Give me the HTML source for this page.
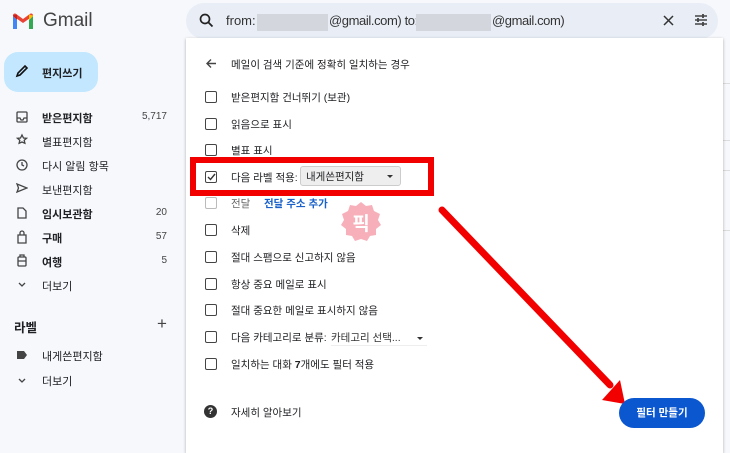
<!DOCTYPE html>
<html><head><meta charset="utf-8"><style>
*{margin:0;padding:0;box-sizing:border-box}
body{width:730px;height:449px;overflow:hidden;background:#f6f8fc;font-family:"Liberation Sans","Noto Sans CJK KR",sans-serif;color:#202124;position:relative}
.a{position:absolute}
.nav{position:absolute;left:42px;font-size:11px;color:#202124}
.b{font-weight:bold}
.cnt{position:absolute;right:563px;font-size:10px;color:#444}
.cb{position:absolute;left:205px;width:12px;height:12px;border:1.6px solid #444;border-radius:2px}
.rt{position:absolute;left:231px;font-size:10.5px;color:#202124}
</style></head><body>
<svg class="a" style="left:12px;top:13px" width="22" height="17" viewBox="0 0 22 17">
<path d="M1 3v13h4V7z" fill="#4285f4"/><path d="M17 7v9h4V3z" fill="#34a853"/>
<path d="M1 3l10 7 10-7v-0.5C21 0.5 19 0 17.5 1.2L11 6 4.5 1.2C3 0 1 0.5 1 2.5z" fill="#ea4335"/>
<path d="M17 7V1.5L21 2.5V3z" fill="#fbbc04"/><path d="M1 3V2.5L5 1.5V7z" fill="#c5221f"/>
</svg>
<div class="a" style="left:43px;top:10px;font-size:19px;color:#444">Gmail</div>
<div class="a" style="left:4px;top:52px;width:94px;height:40px;background:#c2e7ff;border-radius:14px"></div>
<svg class="a" style="left:15px;top:64px" width="14" height="14" viewBox="0 0 14 14"><path d="M2 12l1-3 7-7 2 2-7 7z" fill="none" stroke="#111" stroke-width="1.6"/></svg>
<div class="a b" style="left:42px;top:65px;font-size:11px">편지쓰기</div>
<svg class="a" style="left:16px;top:111px" width="12" height="180" viewBox="0 0 12 180" fill="none" stroke="#444" stroke-width="1.3">
<rect x="1" y="1" width="10" height="10" rx="1"/><path d="M1 7h3l1 2h2l1-2h3"/>
<path d="M6 24l1.5 3 3 .3-2.3 2 .7 3L6 31l-2.9 1.3.7-3-2.3-2 3-.3z"/>
<circle cx="6" cy="54" r="5"/><path d="M6 51v3l2 1"/>
<path d="M1 73l10 4-10 4 1.5-4z"/>
<path d="M2 97h5l3 3v7H2z"/>
<path d="M2 124h8v8H2zM4 124v-2a2 2 0 014 0v2"/>
<rect x="2" y="146" width="8" height="9" rx="1"/><path d="M4 146v-2h4v2M2 150h8"/>
<path d="M3 172l3 3 3-3"/>
</svg>
<div class="nav b" style="top:110px">받은편지함</div><div class="cnt" style="top:111px">5,717</div>
<div class="nav" style="top:134px">별표편지함</div>
<div class="nav" style="top:158px">다시 알림 항목</div>
<div class="nav" style="top:182px">보낸편지함</div>
<div class="nav b" style="top:206px">임시보관함</div><div class="cnt" style="top:207px">20</div>
<div class="nav b" style="top:230px">구매</div><div class="cnt" style="top:231px">57</div>
<div class="nav b" style="top:254px">여행</div><div class="cnt" style="top:255px">5</div>
<div class="nav" style="top:278px">더보기</div>
<div class="a b" style="left:14px;top:317px;font-size:12.5px">라벨</div>
<div class="a" style="left:157px;top:314px;font-size:17px;color:#444">+</div>
<svg class="a" style="left:16px;top:350px" width="12" height="40" viewBox="0 0 12 40"><path d="M1 1h7l3 4-3 4H1z" fill="#444"/><path d="M3 29l3 3 3-3" fill="none" stroke="#444" stroke-width="1.3"/></svg>
<div class="nav" style="top:348px">내게쓴편지함</div>
<div class="nav" style="top:373px">더보기</div>
<div class="a" style="left:186px;top:3px;width:532px;height:36px;background:#e9eef6;border-radius:18px"></div>
<svg class="a" style="left:199px;top:13px" width="15" height="15" viewBox="0 0 15 15"><circle cx="6" cy="6" r="4.5" fill="none" stroke="#222" stroke-width="1.7"/><path d="M9.5 9.5l4 4" stroke="#222" stroke-width="1.8"/></svg>
<div class="a" style="left:226px;top:13px;font-size:13px;color:#333">from:</div>
<div class="a" style="left:257px;top:14px;width:71px;height:17px;background:#d3d6dd"></div>
<div class="a" style="left:329px;top:13px;font-size:13px;color:#333;letter-spacing:-0.4px">@gmail.com) to:</div>
<div class="a" style="left:416px;top:14px;width:75px;height:17px;background:#d3d6dd"></div>
<div class="a" style="left:492px;top:13px;font-size:13px;color:#333;letter-spacing:-0.4px">@gmail.com)</div>
<svg class="a" style="left:663px;top:15px" width="11" height="11"><path d="M1 1l9 9M10 1l-9 9" stroke="#333" stroke-width="1.5"/></svg>
<svg class="a" style="left:694px;top:13px" width="14" height="14" viewBox="0 0 14 14" stroke="#444" stroke-width="1.5"><path d="M1 3h12M1 7h12M1 11h12"/><path d="M9 1v4M4 5v4M9 9v4" stroke-width="1.8"/></svg>
<div class="a" style="left:723px;top:83px;width:7px;height:1px;background:#ddd"></div>
<div class="a" style="left:723px;top:140px;width:7px;height:1px;background:#ddd"></div>
<div class="a" style="left:723px;top:170px;width:7px;height:1px;background:#ddd"></div>
<div class="a" style="left:723px;top:230px;width:7px;height:1px;background:#ddd"></div>
<div class="a" style="left:186px;top:38px;width:537px;height:415px;background:#fff;box-shadow:0 1px 3px rgba(0,0,0,.3)"></div>
<svg class="a" style="left:205px;top:58px" width="12" height="11"><path d="M11 5.5H2M6 1.5l-4 4 4 4" fill="none" stroke="#444" stroke-width="1.4"/></svg>
<div class="rt" style="top:57px">메일이 검색 기준에 정확히 일치하는 경우</div>
<div class="cb" style="top:91px"></div><div class="rt" style="top:90px">받은편지함 건너뛰기 (보관)</div>
<div class="cb" style="top:118px"></div><div class="rt" style="top:117px">읽음으로 표시</div>
<div class="cb" style="top:144px"></div><div class="rt" style="top:143px">별표 표시</div>
<div class="cb" style="top:171px"></div><svg class="a" style="left:207px;top:173px" width="9" height="8"><path d="M1 4l2.5 2.5L8 1" fill="none" stroke="#333" stroke-width="1.4"/></svg>
<div class="rt" style="top:170px">다음 라벨 적용:</div>
<div class="a" style="left:300px;top:166px;width:101px;height:20px;background:#eee;border:1px solid #ccc;border-radius:3px;font-size:10.5px;padding:2px 0 0 5px">내게쓴편지함</div>
<div class="a" style="left:387px;top:175px;width:0;height:0;border:3px solid transparent;border-top:3.5px solid #333"></div>
<div class="a" style="left:190px;top:157px;width:244px;height:39px;border:6px solid #f20000"></div>
<div class="cb" style="top:197px;border-color:#bbb"></div><div class="rt" style="top:196px;color:#666">전달</div>
<div class="a b" style="left:264px;top:196px;font-size:10.5px;color:#1a62c9">전달 주소 추가</div>
<div class="cb" style="top:224px"></div><div class="rt" style="top:223px">삭제</div>
<div class="cb" style="top:251px"></div><div class="rt" style="top:250px">절대 스팸으로 신고하지 않음</div>
<div class="cb" style="top:278px"></div><div class="rt" style="top:277px">항상 중요 메일로 표시</div>
<div class="cb" style="top:304px"></div><div class="rt" style="top:303px">절대 중요한 메일로 표시하지 않음</div>
<div class="cb" style="top:331px"></div><div class="rt" style="top:330px">다음 카테고리로 분류:</div>
<div class="a" style="left:331px;top:330px;font-size:10.5px;color:#333">카테고리 선택...</div>
<div class="a" style="left:331px;top:345px;width:96px;height:1px;background:#eee"></div>
<div class="a" style="left:417px;top:337px;width:0;height:0;border:3px solid transparent;border-top:3.5px solid #333"></div>
<div class="cb" style="top:358px"></div><div class="rt" style="top:357px">일치하는 대화 <b>7</b>개에도 필터 적용</div>
<div class="a" style="left:204px;top:405px;width:13px;height:13px;border-radius:50%;background:#333;color:#fff;font-size:9px;font-weight:bold;text-align:center;line-height:13px">?</div>
<div class="rt" style="top:405px">자세히 알아보기</div>
<svg class="a" style="left:339px;top:200px" width="44" height="44" viewBox="0 0 44 44"><path d="M22 2l5 4 6-1 2 6 6 3-2 6 3 5-5 4 0 6-6 1-3 5-6-2-6 2-3-5-6-1 0-6-5-4 3-5-2-6 6-3 2-6 6 1z" fill="#f6a7b3" opacity=".9"/><text x="22" y="30" text-anchor="middle" font-size="19" font-weight="bold" fill="#fff" font-family="Noto Sans CJK KR,sans-serif">픽</text></svg>
<svg class="a" style="left:0;top:0" width="730" height="449"><path d="M442 210L610 385" stroke="#f20000" stroke-width="7" stroke-linecap="round"/><path d="M602 400L625 404L620 380z" fill="#f20000"/></svg>
<div class="a b" style="left:619px;top:398px;width:86px;height:30px;background:#0b57d0;border-radius:15px;color:#fff;font-size:10.5px;text-align:center;line-height:30px">필터 만들기</div>
</body></html>
